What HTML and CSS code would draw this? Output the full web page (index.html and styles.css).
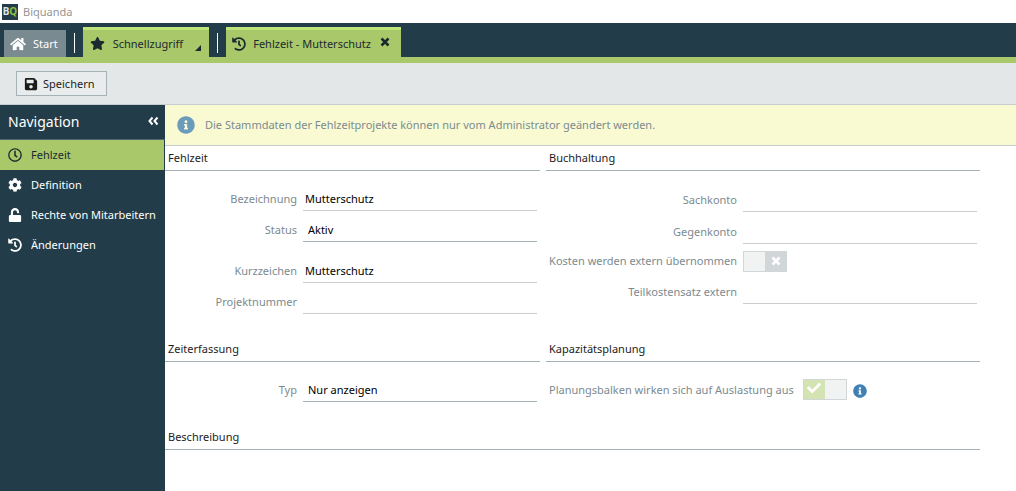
FILE: index.html
```html
<!DOCTYPE html>
<html lang="de">
<head>
<meta charset="utf-8">
<title>Biquanda</title>
<link rel="stylesheet" href="styles.css">
</head>
<body>
<svg class="sprite" aria-hidden="true">
  <symbol id="home" viewBox="0 0 576 512"><path d="M280.37 148.26L96 300.11V464a16 16 0 0 0 16 16l112.06-.29a16 16 0 0 0 15.92-16V368a16 16 0 0 1 16-16h64a16 16 0 0 1 16 16v95.64a16 16 0 0 0 16 16.05L464 480a16 16 0 0 0 16-16V300L295.67 148.26a12.19 12.19 0 0 0-15.3 0zM571.6 251.47L488 182.56V44.05a12 12 0 0 0-12-12h-56a12 12 0 0 0-12 12v72.61L318.47 43a48 48 0 0 0-61 0L4.34 251.47a12 12 0 0 0-1.6 16.9l25.5 31A12 12 0 0 0 45.15 301l235.22-193.74a12.19 12.19 0 0 1 15.3 0L530.9 301a12 12 0 0 0 16.9-1.6l25.5-31a12 12 0 0 0-1.7-16.93z"/></symbol>
  <symbol id="star" viewBox="0 0 576 512"><path d="M259.3 17.8L194 150.2 47.9 171.5c-26.2 3.8-36.7 36.1-17.7 54.6l105.7 103-25 145.5c-4.5 26.3 23.2 46 46.4 33.7L288 439.6l130.7 68.7c23.2 12.2 50.9-7.4 46.4-33.7l-25-145.5 105.7-103c19-18.5 8.5-50.8-17.7-54.6L382 150.2 316.7 17.8c-11.7-23.6-45.6-23.9-57.4 0z"/></symbol>
  <symbol id="save" viewBox="0 0 448 512"><path d="M433.941 129.941l-83.882-83.882A48 48 0 0 0 316.118 32H48C21.49 32 0 53.49 0 80v352c0 26.51 21.49 48 48 48h352c26.51 0 48-21.49 48-48V163.882a48 48 0 0 0-14.059-33.941zM224 416c-35.346 0-64-28.654-64-64 0-35.346 28.654-64 64-64s64 28.654 64 64c0 35.346-28.654 64-64 64zm96-304.52V212c0 6.627-5.373 12-12 12H76c-6.627 0-12-5.373-12-12V108c0-6.627 5.373-12 12-12h228.52c3.183 0 6.235 1.264 8.485 3.515l3.48 3.48A11.996 11.996 0 0 1 320 111.48z"/></symbol>
  <symbol id="history" viewBox="0 0 512 512"><path d="M504 255.531c.253 136.64-111.18 248.372-247.82 248.468-59.015.042-113.223-20.53-155.822-54.911-11.077-8.94-11.905-25.541-1.839-35.607l11.267-11.267c8.609-8.609 22.353-9.551 31.891-1.984C173.062 425.135 212.781 440 256 440c101.705 0 184-82.311 184-184 0-101.705-82.311-184-184-184-48.814 0-93.149 18.969-126.068 49.932l50.754 50.754c10.08 10.08 2.941 27.314-11.313 27.314H24c-8.837 0-16-7.163-16-16V38.627c0-14.254 17.234-21.393 27.314-11.314l49.372 49.372C129.209 34.136 189.552 8 256 8c136.81 0 247.747 110.78 248 247.531zm-180.912 78.784l9.823-12.63c8.138-10.463 6.253-25.542-4.21-33.679L288 256.349V152c0-13.255-10.745-24-24-24h-16c-13.255 0-24 10.745-24 24v135.651l65.409 50.874c10.463 8.137 25.541 6.253 33.679-4.21z"/></symbol>
  <symbol id="times" viewBox="0 0 10 10"><path d="M1.500 1.500l7 7M8.500 1.500l-7 7" fill="none" stroke="currentColor" stroke-width="2.500"/></symbol>
  <symbol id="clock" viewBox="0 0 512 512"><path d="M256 8C119 8 8 119 8 256s111 248 248 248 248-111 248-248S393 8 256 8zm0 448c-110.5 0-200-89.5-200-200S145.5 56 256 56s200 89.5 200 200-89.5 200-200 200zm61.8-104.4l-84.9-61.7c-3.1-2.3-4.9-5.9-4.9-9.7V116c0-6.6 5.4-12 12-12h32c6.6 0 12 5.4 12 12v141.700l66.800 48.600c5.400 3.900 6.500 11.400 2.600 16.800L334.600 349c-3.900 5.300-11.400 6.500-16.800 2.600z"/></symbol>
  <symbol id="cog" viewBox="0 0 512 512"><path d="M487.4 315.7l-42.6-24.6c4.3-23.2 4.3-47 0-70.2l42.6-24.6c4.9-2.8 7.1-8.6 5.5-14-11.1-35.6-30-67.8-54.7-94.6-3.8-4.1-10-5.1-14.8-2.3L380.8 110c-17.9-15.4-38.5-27.3-60.8-35.1V25.8c0-5.6-3.9-10.500-9.400-11.700-36.700-8.200-74.300-7.800-109.200 0-5.500 1.200-9.400 6.100-9.400 11.700V75c-22.200 7.900-42.800 19.800-60.800 35.100L88.700 85.500c-4.900-2.800-11-1.900-14.800 2.300-24.700 26.700-43.600 58.900-54.700 94.600-1.700 5.400.6 11.200 5.500 14L67.300 221c-4.300 23.200-4.300 47 0 70.200l-42.600 24.600c-4.900 2.800-7.100 8.600-5.500 14 11.100 35.600 30 67.800 54.700 94.600 3.800 4.100 10 5.100 14.800 2.300l42.600-24.600c17.900 15.400 38.500 27.300 60.800 35.100v49.200c0 5.600 3.900 10.500 9.400 11.700 36.700 8.200 74.300 7.800 109.200 0 5.500-1.200 9.400-6.100 9.400-11.700v-49.200c22.200-7.900 42.800-19.800 60.800-35.100l42.600 24.600c4.900 2.800 11 1.900 14.800-2.300 24.700-26.700 43.600-58.900 54.700-94.600 1.500-5.500-.7-11.300-5.600-14.100zM256 336c-44.100 0-80-35.900-80-80s35.900-80 80-80 80 35.900 80 80-35.900 80-80 80z"/></symbol>
  <symbol id="unlock" viewBox="0 0 448 512"><path d="M400 256H152V152.900c0-39.600 31.700-72.500 71.300-72.900 40-.4 72.700 32.100 72.700 72v16c0 13.300 10.700 24 24 24h32c13.300 0 24-10.700 24-24v-16C376 68 307.500-.3 223.500 0 139.500.3 72 69.500 72 153.500V256H48c-26.500 0-48 21.500-48 48v160c0 26.500 21.500 48 48 48h352c26.500 0 48-21.500 48-48V304c0-26.500-21.500-48-48-48z"/></symbol>
  <symbol id="collapse" viewBox="0 0 12 10"><path d="M5.500 1.500L2.500 5l3 3.500M10.500 1.500L7.500 5l3 3.500" fill="none" stroke="currentColor" stroke-width="2"/></symbol>
  <symbol id="info" viewBox="0 0 512 512"><path d="M256 8C119.043 8 8 119.083 8 256c0 136.997 111.043 248 248 248s248-111.003 248-248C504 119.083 392.957 8 256 8zm0 110c23.196 0 42 18.804 42 42s-18.804 42-42 42-42-18.804-42-42 18.804-42 42-42zm56 254c0 6.627-5.373 12-12 12h-88c-6.627 0-12-5.373-12-12v-24c0-6.627 5.373-12 12-12h12v-64h-12c-6.627 0-12-5.373-12-12v-24c0-6.627 5.373-12 12-12h64c6.627 0 12 5.373 12 12v100h12c6.627 0 12 5.373 12 12v24z"/></symbol>
  <symbol id="check" viewBox="0 0 512 512"><path d="M173.898 439.404l-166.400-166.400c-9.997-9.997-9.997-26.206 0-36.204l36.203-36.204c9.997-9.998 26.207-9.998 36.204 0L192 312.690 432.095 72.596c9.997-9.997 26.207-9.997 36.204 0l36.203 36.204c9.997 9.997 9.997 26.206 0 36.204l-294.400 294.401c-9.998 9.997-26.207 9.997-36.204-.001z"/></symbol>
</svg>

<header class="titlebar">
  <span class="logo" aria-hidden="true"><b>B</b><b class="logo-q">Q</b></span>
  <span>Biquanda</span>
</header>

<nav class="tabs">
  <button class="tab tab-start" type="button"><svg class="icon icon-wide"><use href="#home"/></svg>Start</button>
  <span class="divider"></span>
  <button class="tab tab-quick" type="button"><svg class="icon icon-star"><use href="#star"/></svg>Schnellzugriff<span class="corner"></span></button>
  <span class="divider"></span>
  <div class="tab tab-page"><svg class="icon"><use href="#history"/></svg>Fehlzeit - Mutterschutz
    <button class="close" type="button" aria-label="Schließen"><svg><use href="#times"/></svg></button>
  </div>
</nav>

<div class="toolbar">
  <button class="save" type="button"><svg class="icon"><use href="#save"/></svg>Speichern</button>
</div>

<div class="body">
  <aside class="sidebar">
    <div class="nav-head"><span>Navigation</span>
      <button class="collapse" type="button" aria-label="Navigation einklappen"><svg><use href="#collapse"/></svg></button>
    </div>
    <nav class="nav-list">
      <a class="nav-item nav-active" href="#"><svg class="icon"><use href="#clock"/></svg><span class="nav-text">Fehlzeit</span></a>
      <a class="nav-item" href="#"><svg class="icon"><use href="#cog"/></svg><span class="nav-text">Definition</span></a>
      <a class="nav-item" href="#"><svg class="icon"><use href="#unlock"/></svg><span class="nav-text">Rechte von Mitarbeitern</span></a>
      <a class="nav-item" href="#"><svg class="icon"><use href="#history"/></svg><span class="nav-text">Änderungen</span></a>
    </nav>
  </aside>

  <main class="main">
    <p class="notice"><svg class="notice-icon"><use href="#info"/></svg>Die Stammdaten der Fehlzeitprojekte können nur vom Administrator geändert werden.</p>
    <form class="form">
      <section>
        <h2 class="heading">Fehlzeit</h2>
        <div class="rows">
          <div class="row"><label class="label" for="bez">Bezeichnung</label><input class="field" id="bez" value="Mutterschutz" readonly></div>
          <div class="row"><label class="label" for="status">Status</label><select class="field field-select" id="status"><option>Aktiv</option></select></div>
          <div class="row row-group"><label class="label" for="kurz">Kurzzeichen</label><input class="field" id="kurz" value="Mutterschutz" readonly></div>
          <div class="row"><label class="label" for="nummer">Projektnummer</label><input class="field" id="nummer" readonly></div>
        </div>
      </section>
      <section>
        <h2 class="heading">Buchhaltung</h2>
        <div class="rows rows-wide">
          <div class="row"><label class="label" for="sach">Sachkonto</label><input class="field" id="sach" readonly></div>
          <div class="row"><label class="label" for="gegen">Gegenkonto</label><input class="field" id="gegen" readonly></div>
          <div class="row row-toggle"><label class="label" for="kosten">Kosten werden extern übernommen</label><span class="toggle"><input class="toggle-input" type="checkbox" id="kosten" disabled><svg class="toggle-mark toggle-times"><use href="#times"/></svg></span></div>
          <div class="row"><label class="label" for="teil">Teilkostensatz extern</label><input class="field" id="teil" readonly></div>
        </div>
      </section>
      <section>
        <h2 class="heading">Zeiterfassung</h2>
        <div class="rows">
          <div class="row"><label class="label" for="typ">Typ</label><select class="field field-select" id="typ"><option>Nur anzeigen</option></select></div>
        </div>
      </section>
      <section>
        <h2 class="heading">Kapazitätsplanung</h2>
        <div class="rows rows-inline">
          <div class="row"><label class="label" for="plan">Planungsbalken wirken sich auf Auslastung aus</label><span class="toggle"><input class="toggle-input" type="checkbox" id="plan" checked disabled><svg class="toggle-mark"><use href="#check"/></svg></span><svg class="hint"><use href="#info"/></svg></div>
        </div>
      </section>
      <section class="full">
        <h2 class="heading">Beschreibung</h2>
      </section>
    </form>
  </main>
</div>
</body>
</html>
```
FILE: styles.css
```css
* { box-sizing: border-box; }

body {
  margin: 0;
  min-height: 100vh;
  display: flex;
  flex-direction: column;
  background: #fff;
  color: #1c1c1c;
  font: 11px/16px "Noto Sans", "Open Sans", sans-serif;
}

button, input, select { font: inherit; color: inherit; border-radius: 0; }
svg { fill: currentColor; flex: none; }
.sprite { display: none; }
.icon { width: 14px; height: 14px; }
.icon-wide { width: 16px; }
.icon-star { width: 15px; height: 13px; }

.titlebar {
  display: flex;
  align-items: center;
  gap: 5px;
  height: 23px;
  color: #949494;
}
.logo {
  display: flex;
  justify-content: center;
  width: 16px;
  height: 16px;
  margin-left: 2px;
  background: #223d49;
  color: #dfe5e8;
  font-size: 10px;
  line-height: 15px;
}
.logo-q { color: #8fbf3f; }

.tabs {
  display: flex;
  align-items: flex-end;
  height: 40px;
  padding-left: 4px;
  background: #223d49;
  border-bottom: 6px solid #a9c869;
}
.tab {
  display: flex;
  align-items: center;
  gap: 7px;
  height: 30px;
  padding: 0 6px;
  border: 0;
  border-top: 3px solid #bfe57a;
  background: #a9c869;
  color: #1c2a30;
  white-space: nowrap;
}
.tab-start {
  height: 27px;
  padding-right: 8px;
  border-top: 0;
  background: #7a8a91;
  color: #fff;
}
.tab-quick { padding: 0 8px 0 7px; gap: 8px; }
.corner {
  align-self: flex-end;
  margin: 0 0 6px 4px;
  border-left: 6px solid transparent;
  border-bottom: 6px solid #1c2a30;
}
.divider {
  width: 1px;
  height: 20px;
  margin: 0 8px 4px;
  background: #fff;
}
.close, .collapse {
  display: flex;
  padding: 0;
  border: 0;
  background: none;
}
.close { margin: 0 0 4px 2px; }
.close svg { width: 10px; height: 10px; }
.tab-page { padding-right: 11px; }

.toolbar {
  display: flex;
  align-items: center;
  height: 42px;
  padding-left: 16px;
  background: #e3e7e7;
  border-bottom: 1px solid #c5cdd1;
}
.save {
  display: flex;
  align-items: center;
  gap: 5px;
  height: 25px;
  padding: 0 12px 0 7px;
  border: 1px solid #a5b3b6;
  background: #e9ecec;
}

.body { display: flex; flex: 1; }
.sidebar {
  width: 165px;
  flex: none;
  background: #223d49;
  color: #fff;
}
.nav-head {
  display: flex;
  align-items: center;
  justify-content: space-between;
  height: 35px;
  padding: 0 6px 0 8px;
  border-bottom: 1px solid #50656f;
  font-size: 14px;
}
.collapse svg { width: 12px; height: 10px; margin-bottom: 3px; }
.nav-item {
  display: flex;
  align-items: center;
  gap: 9px;
  height: 30px;
  margin-right: 1px;
  padding: 0 8px;
  color: inherit;
  text-decoration: none;
}
.nav-active { background: #a9c869; color: #1c2a30; }
.nav-text { overflow: hidden; white-space: nowrap; }

.main { flex: 1; min-width: 0; }
.notice {
  display: flex;
  align-items: center;
  gap: 10px;
  min-height: 41px;
  margin: 0;
  padding-left: 12px;
  background: #f9fad2;
  border-bottom: 1px solid #c5cdd1;
  color: #7c8a90;
}
.notice-icon { width: 18px; height: 18px; color: #6a9abc; }

.form {
  display: grid;
  grid-template-columns: 375fr 434fr;
  column-gap: 6px;
  margin-right: 36px;
}
.full { grid-column: 1 / -1; }
.heading {
  height: 25px;
  margin: 0;
  padding: 4px 3px;
  border-bottom: 1px solid #a3b1b4;
  font-size: 11px;
  font-weight: 400;
}
.rows {
  display: flex;
  flex-direction: column;
  gap: 9px;
  padding: 18px 3px 23px 0;
}
.row {
  display: grid;
  grid-template-columns: 132px 1fr;
  align-items: center;
  column-gap: 6px;
  color: #7c8a90;
}
.row-group { margin-top: 10px; }
.rows-wide { gap: 10px; padding-top: 19px; }
.rows-wide .row { grid-template-columns: 191px 1fr; }
.row-toggle { margin-top: -3px; }
.label { padding-bottom: 2px; text-align: right; white-space: nowrap; }
.field {
  width: 100%;
  min-width: 0;
  height: 22px;
  padding: 0 2px 2px;
  border: 0;
  border-bottom: 1px solid #cacdce;
  background: none;
  color: #000;
}
.field-select {
  appearance: none;
  padding: 0 5px 1px;
  border-bottom-color: #a3b1b4;
}
.rows-inline { padding-top: 17px; }
.rows-inline .row {
  grid-template-columns: auto auto 1fr;
  justify-content: start;
  padding-left: 3px;
}
.rows-inline .label { padding: 0 3px 0 0; }
.toggle {
  display: grid;
  width: 44px;
}
.toggle-input {
  grid-area: 1 / 1;
  appearance: none;
  width: 44px;
  height: 21px;
  margin: 0;
  border: 1px solid #d1d7d9;
  background: linear-gradient(90deg, #f1f3f3 50%, #d1d7d9 50%);
}
.toggle-input:checked { background: linear-gradient(90deg, #d3e3b2 50%, #f1f3f3 50%); }
.toggle-mark {
  grid-area: 1 / 1;
  width: 14px;
  height: 14px;
  margin: 2px 0 0 4px;
  color: #fff;
}
.toggle-times { width: 10px; height: 10px; margin: 5px 0 0 28px; }
.hint { width: 14px; height: 14px; margin-top: 2px; color: #4080b4; }
```
